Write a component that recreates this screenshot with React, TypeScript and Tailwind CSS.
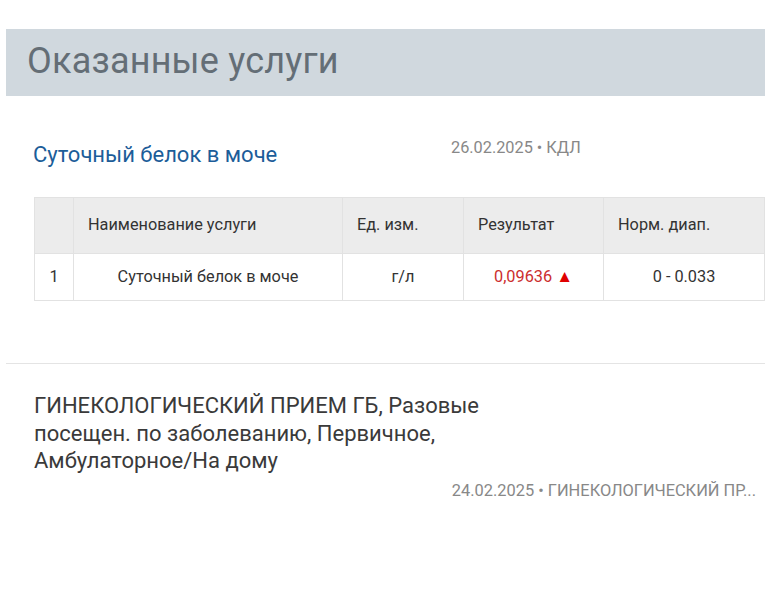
import React from "react";

export default function App() {
  return (
    <div className="w-[772px] h-[600px] bg-white overflow-hidden" style={{ fontFamily: "Roboto, 'Noto Sans', sans-serif" }}>
      <div className="h-[29px]" />
      <div className="mx-[6px] w-[759px] h-[67px] bg-[#d0d8de] flex items-center pl-[21px]">
        <h1 className="text-[36px] leading-none text-[#646e76] font-normal tracking-[0.2px] -mt-[4px]">Оказанные услуги</h1>
      </div>

      <div className="ml-[34px] w-[731px] mt-[40px] flex">
        <div className="w-[418px] text-[22px] leading-[30px] text-[#1c5d99] pt-[4px] -ml-[1px]">Суточный белок в моче</div>
        <div className="text-[16.3px] leading-[20px] text-[#888888] pt-[2px]">26.02.2025 • КДЛ</div>
      </div>

      <table className="ml-[34px] mt-[27px] w-[731px] border-collapse text-[16.3px] text-[#333]">
        <thead>
          <tr className="bg-[#ececec] h-[56px]">
            <th className="w-[39px] border border-[#e2e2e2] font-normal"></th>
            <th className="w-[269px] border border-[#e2e2e2] font-normal text-left pl-[14px]">Наименование услуги</th>
            <th className="w-[121px] border border-[#e2e2e2] font-normal text-left pl-[14px]">Ед. изм.</th>
            <th className="w-[140px] border border-[#e2e2e2] font-normal text-left pl-[14px]">Результат</th>
            <th className="border border-[#e2e2e2] font-normal text-left pl-[14px]">Норм. диап.</th>
          </tr>
        </thead>
        <tbody>
          <tr className="h-[47px]">
            <td className="border border-[#e2e2e2] text-center">1</td>
            <td className="border border-[#e2e2e2] text-center">Суточный белок в моче</td>
            <td className="border border-[#e2e2e2] text-center">г/л</td>
            <td className="border border-[#e2e2e2] text-center text-[#cc2e2e]">0,09636 <span className="text-[17px] text-[#e00000]">▲</span></td>
            <td className="border border-[#e2e2e2] text-center">0 - 0.033</td>
          </tr>
        </tbody>
      </table>

      <div className="mx-[6px] w-[759px] h-px bg-[#e4e4e4] mt-[62px]" />

      <div className="ml-[34px] mt-[28px] w-[490px] text-[22px] leading-[27.5px] text-[#3a3a3a]">
        ГИНЕКОЛОГИЧЕСКИЙ ПРИЕМ ГБ, Разовые посещен. по заболеванию, Первичное, Амбулаторное/На дому
      </div>
      <div className="ml-[34px] w-[722px] text-right text-[16.4px] text-[#888888] mt-[4px] whitespace-nowrap">
        24.02.2025 • ГИНЕКОЛОГИЧЕСКИЙ ПР...
      </div>
    </div>
  );
}
